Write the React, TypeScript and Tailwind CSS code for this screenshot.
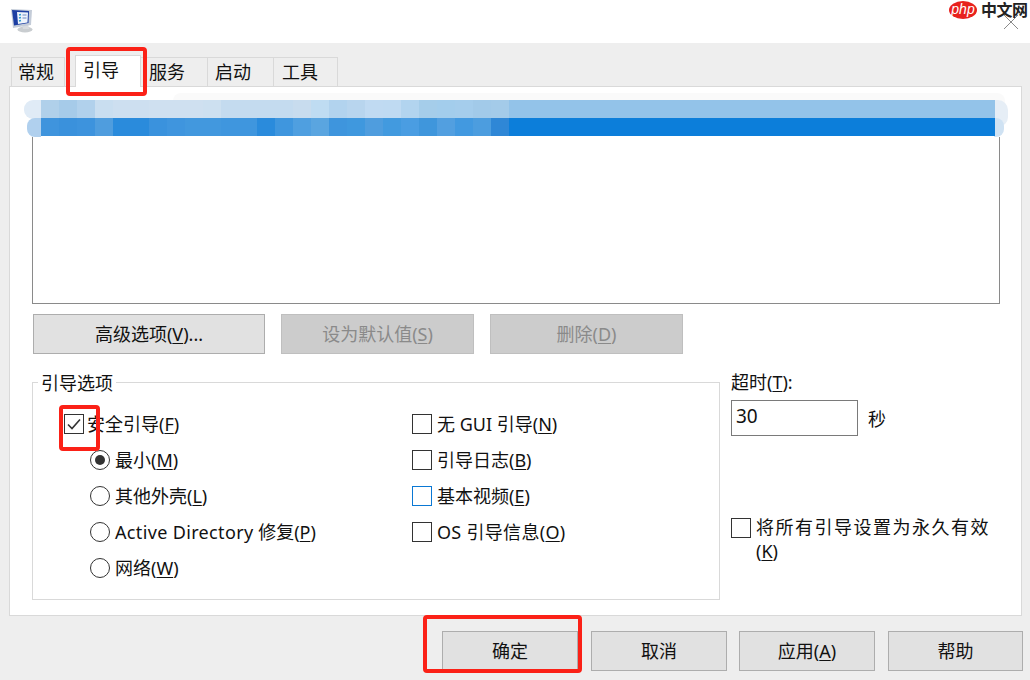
const row1 = ["#b0d0ea", "#a6cbe9", "#b1d1ec", "#c9def0", "#cddff0", "#cddff0", "#cfe0f0", "#cfe0f0", "#cfe0f0", "#cde0f0", "#c4dbef", "#c4dbef", "#c4dbef", "#c4dbef", "#c8dcee", "#bfdcf2", "#b2d3ee", "#b8d5ee", "#c0daf2", "#bfdaf2", "#b2d4ef", "#a5cdea", "#a3cdec", "#a5cdec", "#a2cae9", "#a4cbe9"];
const row2 = ["#3f94dd", "#3a91dc", "#3d93dd", "#4f9dde", "#2a8bdc", "#2a8bdc", "#3a92dd", "#3f95de", "#4298de", "#4298de", "#3f96de", "#3f96de", "#2a8bdc", "#3f96de", "#4f9fe0", "#5aa5e0", "#3e95dd", "#3f98de", "#4f9dde", "#429adf", "#4a9de2", "#3f96dc", "#529fe0", "#4299e0", "#4c9ddf", "#2f87d6"];

function Key({ k }: { k: string }) {
  return (
    <>
      (<span className="underline underline-offset-2">{k}</span>)
    </>
  );
}

function Check({ checked, focus }: { checked?: boolean; focus?: boolean }) {
  return (
    <span className={`flex h-5 w-5 shrink-0 items-center justify-center border bg-white ${focus ? "border-[#0a78d4]" : "border-[#333333]"}`}>
      {checked && (
        <svg width="14" height="12" viewBox="0 0 14 12" fill="none" stroke="#333333" strokeWidth="1.6">
          <path d="M1 6.5 L5 10.5 L13 1.5" />
        </svg>
      )}
    </span>
  );
}

function Radio({ checked }: { checked?: boolean }) {
  return (
    <span className="flex h-5 w-5 shrink-0 items-center justify-center rounded-full border border-[#333333] bg-white">
      {checked && <span className="h-2.5 w-2.5 rounded-full bg-[#333333]" />}
    </span>
  );
}

function Tab({ label, w }: { label: string; w: string }) {
  return <div className={`h-full border-t border-r border-[#d9d9d9] pt-[5px] ${w}`}>{label}</div>;
}

export default function App() {
  return (
    <div className="relative flex h-[680px] w-[1030px] flex-col overflow-hidden bg-[#eeeeee] font-['Noto_Sans','Noto_Sans_CJK_SC',sans-serif] text-[18px] leading-none text-[#111111]">
      {/* title bar */}
      <div className="relative h-[43px] shrink-0 bg-white pl-[10px] pt-[8px]">
        <svg width="24" height="25" viewBox="0 0 24 25">
          <ellipse cx="15" cy="21.5" rx="7.5" ry="3" fill="#c9cdd0" />
          <path d="M12 16 L18 15 L19 21 L13 21 Z" fill="#d8dbde" />
          <path d="M1 1 L22 2 L21 17 L3 20 Z" fill="#c4ccd8" />
          <path d="M2 2 L19 3 L18.5 15 L4 17.5 Z" fill="#1d3fa3" />
          <path d="M7 4 L18 4.5 L17.5 14.5 L8 16 Z" fill="#eef4fb" />
          <path d="M9 7 L11 6.5 M9 10 L11 9.5 M9 13 L11 12.5" stroke="#2f9ad0" strokeWidth="1.6" />
          <path d="M12.5 7 L16.5 7 M12.5 10 L16.5 10" stroke="#6f8ac4" strokeWidth="1" />
        </svg>
        <svg className="absolute left-[1003px] top-[15px]" width="16" height="14" viewBox="0 0 16 14" stroke="#8a8a8a" fill="none">
          <path d="M1 14 L15 0 M1 0 L15 14" />
        </svg>
        <div className="absolute left-[949px] top-[1px] flex items-center">
          <span className="flex h-[18px] w-[28px] items-center justify-center rounded-[50%] bg-[#e8211d] pb-[2px] font-['Liberation_Sans',sans-serif] text-[14px] italic text-white">
            php
          </span>
          <span className="ml-[4px] text-[16px] font-bold tracking-[-0.5px] text-[#222222]">中文网</span>
        </div>
      </div>

      {/* tabs */}
      <div className="relative z-10 mt-[14px] flex h-[29px] shrink-0 pl-[11px] text-[#111111]">
        <div className="h-full w-[54px] border-x border-t border-[#d9d9d9] pl-[6px] pt-[5px]">常规</div>
        <div className="ml-[10px] -mt-[2px] h-[32px] w-[66px] border-x border-t border-[#d9d9d9] bg-white pl-[7px] pt-[5px]">引导</div>
        <Tab label="服务" w="w-[67px] pl-[8px]" />
        <Tab label="启动" w="w-[66px] pl-[7px]" />
        <Tab label="工具" w="w-[64px] pl-[8px]" />
      </div>

      {/* main panel */}
      <div className="ml-[9px] h-[530px] w-[1013px] shrink-0 border border-[#d9d9d9] bg-white pl-[22px] pt-[13px]">
        <div className="relative h-[204px] w-[968px] border border-[#8a8a8a]">
          <div className="absolute -left-[12px] -right-[12px] -top-[6px] h-[42px] bg-white" />
          <div className="absolute left-[140px] right-[-6px] -top-[8px] h-[10px] rounded-t-[8px] bg-[#fafafa]" />
          <div className="absolute -left-[9px] -top-[1px] h-[19px] w-[20px] rounded-l-[9px] bg-[#e0ebf6]" />
          <div className="absolute -left-[6px] top-[17px] h-[19px] w-[14px] rounded-l-[8px] bg-[#b0d0ee]" />
          <div className="absolute -right-[9px] -top-[1px] h-[27px] w-[14px] rounded-r-[10px] bg-[#e6eef6]" />
          <div className="absolute -right-[5px] top-[17px] h-[19px] w-[10px] rounded-r-[8px] bg-[#cfe2f3]" />
          <div className="absolute left-[8px] right-[4px] -top-[1px] flex h-[18px] bg-[#93c3e9]">
            {row1.map((c, i) => (
              <span key={i} className="h-full w-[18px]" style={{ backgroundColor: c }} />
            ))}
          </div>
          <div className="absolute left-[8px] right-[4px] top-[17px] flex h-[18px] bg-[#0c7eda]">
            {row2.map((c, i) => (
              <span key={i} className="h-full w-[18px]" style={{ backgroundColor: c }} />
            ))}
          </div>
        </div>

        <div className="mt-[10px] flex gap-[16px] pl-[1px]">
          <button className="flex h-[40px] w-[232px] items-center justify-center border border-[#adadad] bg-[#e1e1e1]">
            <span>高级选项(<span className="underline underline-offset-2">V</span>)...</span>
          </button>
          <button className="flex h-[40px] w-[193px] items-center justify-center border border-[#bfbfbf] bg-[#cccccc] text-[#8a8a8a]">
            <span>设为默认值<Key k="S" /></span>
          </button>
          <button className="flex h-[40px] w-[193px] items-center justify-center border border-[#bfbfbf] bg-[#cccccc] text-[#8a8a8a]">
            <span>删除<Key k="D" /></span>
          </button>
        </div>

        <div className="mt-[19px] flex">
          {/* options group */}
          <div className="relative mt-[9px] h-[218px] w-[688px] shrink-0 border border-[#d9d9d9] pt-[23px]">
            <span className="absolute -top-[10px] left-[5px] bg-white px-[3px] leading-[20px]">引导选项</span>
            <div className="grid grid-cols-[348px_1fr] auto-rows-[36px] items-center pl-[31px]">
              <div className="flex items-center gap-[3px]">
                <Check checked />
                <span>安全引导<Key k="F" /></span>
              </div>
              <div className="flex items-center gap-[5px]">
                <Check />
                <span>无 GUI 引导<Key k="N" /></span>
              </div>
              <div className="flex items-center gap-[5px] pl-[26px]">
                <Radio checked />
                <span>最小<Key k="M" /></span>
              </div>
              <div className="flex items-center gap-[5px]">
                <Check />
                <span>引导日志<Key k="B" /></span>
              </div>
              <div className="flex items-center gap-[5px] pl-[26px]">
                <Radio />
                <span>其他外壳<Key k="L" /></span>
              </div>
              <div className="flex items-center gap-[5px]">
                <Check focus />
                <span>基本视频<Key k="E" /></span>
              </div>
              <div className="flex items-center gap-[5px] pl-[26px]">
                <Radio />
                <span><span className="tracking-[0.35px]">Active Directory</span> 修复<Key k="P" /></span>
              </div>
              <div className="flex items-center gap-[5px]">
                <Check />
                <span className="tracking-[0.3px]">OS 引导信息<Key k="O" /></span>
              </div>
              <div className="flex items-center gap-[5px] pl-[26px]">
                <Radio />
                <span>网络<Key k="W" /></span>
              </div>
            </div>
          </div>

          {/* timeout column */}
          <div className="ml-[11px] flex flex-col">
            <span className="leading-[18px]">超时<Key k="T" />:</span>
            <div className="mt-[9px] flex items-center gap-[10px]">
              <div className="flex h-[36px] w-[127px] items-start border border-[#7a7a7a] pl-[4px] pt-[6px] text-[19px]">30</div>
              <span className="mt-[2px]">秒</span>
            </div>
            <div className="mt-[82px] flex w-[270px] gap-[5px]">
              <Check />
              <span className="-mt-[3px] leading-[24px]">
                <span className="tracking-[1.5px]">将所有引导设置为永久有效</span>
                <br />
                <Key k="K" />
              </span>
            </div>
          </div>
        </div>
      </div>

      {/* dialog buttons */}
      <div className="mt-[15px] flex pl-[442px]">
        <button className="h-[40px] w-[136px] border border-[#adadad] bg-[#e1e1e1]">确定</button>
        <button className="ml-[13px] h-[40px] w-[136px] border border-[#adadad] bg-[#e1e1e1]">取消</button>
        <button className="ml-[12px] h-[40px] w-[136px] border border-[#adadad] bg-[#e1e1e1]">应用<Key k="A" /></button>
        <button className="ml-[13px] h-[40px] w-[135px] border border-[#adadad] bg-[#e1e1e1]">帮助</button>
      </div>

      {/* red annotation boxes */}
      <div className="absolute left-[66px] top-[47px] z-20 h-[49px] w-[81px] rounded-[4px] border-[4px] border-[#fb2117]" />
      <div className="absolute left-[59px] top-[405px] z-20 h-[46px] w-[41px] rounded-[4px] border-[4px] border-[#fb2117]" />
      <div className="absolute left-[423px] top-[615px] z-20 h-[58px] w-[159px] rounded-[4px] border-[4px] border-[#fb2117]" />
    </div>
  );
}
